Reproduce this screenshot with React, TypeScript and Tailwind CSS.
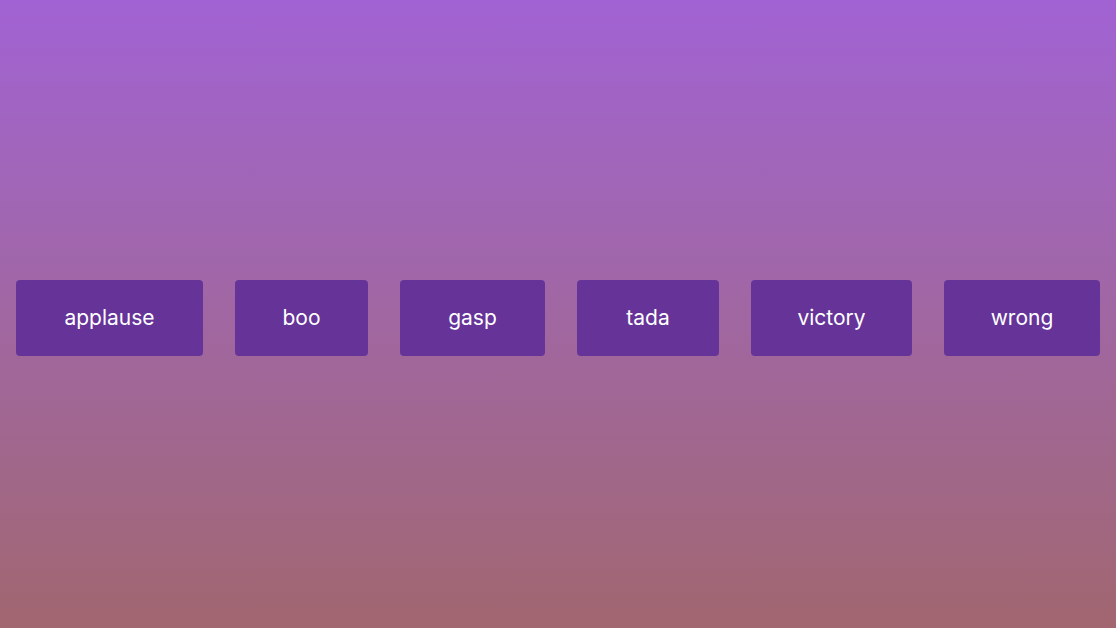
import React from 'react';

const sounds = [
  { name: 'applause', width: 'w-[187px]' },
  { name: 'boo', width: 'w-[133px]' },
  { name: 'gasp', width: 'w-[145px]' },
  { name: 'tada', width: 'w-[142px]' },
  { name: 'victory', width: 'w-[161px]' },
  { name: 'wrong', width: 'w-[156px]' },
];

const App: React.FC = () => {
  const play = (name: string) => {
    console.log('play', name);
  };

  return (
    <div className="min-h-screen bg-gradient-to-b from-[#a162d3] to-[#a1666f] flex items-center justify-between px-4 pt-2 font-['Inter',sans-serif]">
      {sounds.map((s) => (
        <button
          key={s.name}
          onClick={() => play(s.name)}
          className={`${s.width} h-[76px] rounded bg-[#663399] text-white text-[21px] leading-7 flex items-center justify-center`}
        >
          {s.name}
        </button>
      ))}
    </div>
  );
};

export default App;
